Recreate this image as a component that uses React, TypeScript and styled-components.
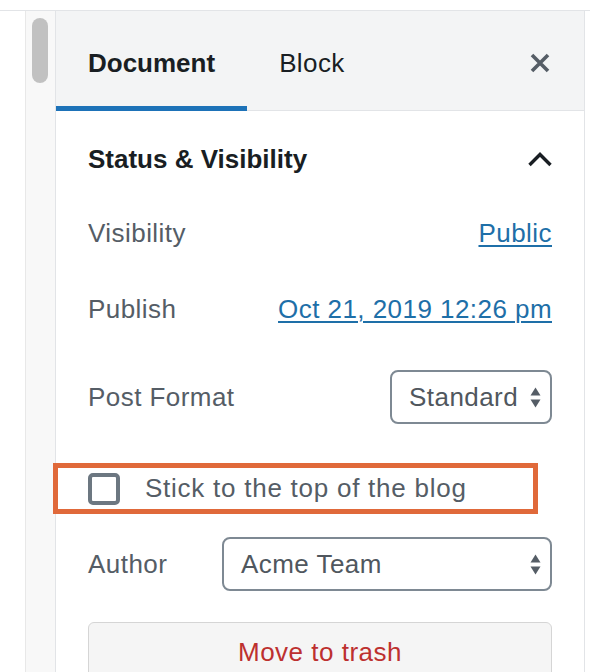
import React from "react";
import styled, { createGlobalStyle } from "styled-components";

const Global = createGlobalStyle`
  html, body { margin: 0; padding: 0; background: #fff; }
  body { font-family: "Liberation Sans", Arial, sans-serif; }
  * { box-sizing: border-box; }
`;

const Page = styled.div`
  display: flex;
  flex-direction: column;
  height: 672px;
  overflow: hidden;
  background: #fff;
`;

const TopStrip = styled.div`
  height: 11px;
  flex: none;
  border-bottom: 1px solid #e2e4e7;
`;

const Main = styled.div`
  flex: 1;
  display: flex;
  min-height: 0;
`;

const Gutter = styled.div`
  width: 25px;
  flex: none;
`;

const Track = styled.div`
  width: 30px;
  flex: none;
  border-left: 1px solid #e8e8e8;
  background: #f8f8f8;
  padding: 7px 0 0 6px;
`;

const Thumb = styled.div`
  width: 16px;
  height: 65px;
  border-radius: 8px;
  background: #c1c1c1;
`;

const Sidebar = styled.aside`
  width: 530px;
  flex: none;
  border-left: 1px solid #e2e4e7;
  border-right: 1px solid #e2e4e7;
  display: flex;
  flex-direction: column;
`;

const Header = styled.div`
  height: 100px;
  flex: none;
  display: flex;
  align-items: stretch;
  background: #f3f4f5;
  box-shadow: inset 0 -1px 0 #e2e4e7;
`;

const Tab = styled.button<{ $active?: boolean }>`
  border: 0;
  margin: 0;
  background: transparent;
  padding: 4px 32px 0;
  font-family: inherit;
  font-size: 26px;
  color: #191e23;
  font-weight: ${(p) => (p.$active ? 700 : 400)};
  letter-spacing: ${(p) => (p.$active ? "0" : "0.4px")};
  box-shadow: ${(p) => (p.$active ? "inset 0 -5px 0 #1d72b8" : "none")};
  cursor: pointer;
`;

const CloseButton = styled.button`
  margin-left: auto;
  margin-right: 34px;
  border: 0;
  padding: 4px 0 0;
  background: transparent;
  display: flex;
  align-items: center;
  color: #555d66;
`;

const Body = styled.div`
  padding: 0 32px;
  display: flex;
  flex-direction: column;
`;

const PanelTitle = styled.div`
  height: 96px;
  display: flex;
  align-items: center;
  justify-content: space-between;
  font-size: 26px;
  font-weight: 700;
  color: #191e23;
`;

const Row = styled.div<{ $h: number; $mt: number }>`
  height: ${(p) => p.$h}px;
  margin-top: ${(p) => p.$mt}px;
  display: flex;
  align-items: center;
  justify-content: space-between;
  font-size: 26px;
  letter-spacing: 0.45px;
  color: #555d66;
`;

const Label = styled.span`
  color: #555d66;
`;

const Link = styled.a`
  color: #1e6fa8;
  text-decoration: underline;
  text-underline-offset: 3px;
  text-decoration-thickness: 2px;
`;

const SelectBox = styled.div<{ $w: number }>`
  width: ${(p) => p.$w}px;
  height: 54px;
  border: 2px solid #7e8993;
  border-radius: 8px;
  display: flex;
  align-items: center;
  padding: 0 9px 0 17px;
  font-size: 26px;
  color: #50575e;
  background: #fff;
`;

const SelectText = styled.span`
  flex: 1;
`;

const Highlight = styled.div`
  margin-top: 39px;
  margin-left: -35px;
  width: 485px;
  height: 51px;
  border: 5px solid #e0693a;
  display: flex;
  align-items: center;
  padding-left: 30px;
  gap: 25px;
  font-size: 26px;
  letter-spacing: 0.75px;
  color: #555d66;
`;

const Checkbox = styled.span`
  width: 32px;
  height: 32px;
  border: 4px solid #6c7781;
  border-radius: 5px;
  background: #fff;
  flex: none;
`;

const TrashButton = styled.button`
  margin-top: 31px;
  width: 100%;
  height: 62px;
  border: 1.5px solid #d5d5d5;
  border-radius: 6px;
  background: #f5f5f5;
  font-family: inherit;
  font-size: 26px;
  letter-spacing: 0.5px;
  color: #bd302f;
  padding: 0 0 2px;
`;

const Arrows = () => (
  <svg width="11" height="21" viewBox="0 0 11 21" aria-hidden="true">
    <path d="M5.5 0.5 L10.5 8.5 L0.5 8.5 Z" fill="#555d66" />
    <path d="M5.5 20.5 L10.5 12.5 L0.5 12.5 Z" fill="#555d66" />
  </svg>
);

const CloseIcon = () => (
  <svg width="20" height="20" viewBox="0 0 20 20" aria-hidden="true">
    <path d="M2 2 L18 18 M18 2 L2 18" stroke="currentColor" strokeWidth="3.6" strokeLinecap="butt" />
  </svg>
);

const ChevronUp = () => (
  <svg width="24" height="15" viewBox="0 0 24 15" aria-hidden="true">
    <path d="M1.5 13 L12 2.5 L22.5 13" fill="none" stroke="#191e23" strokeWidth="3.4" />
  </svg>
);

export default function App() {
  return (
    <>
      <Global />
      <Page>
        <TopStrip />
        <Main>
          <Gutter />
          <Track>
            <Thumb />
          </Track>
          <Sidebar>
            <Header>
              <Tab $active>Document</Tab>
              <Tab>Block</Tab>
              <CloseButton aria-label="Close settings">
                <CloseIcon />
              </CloseButton>
            </Header>
            <Body>
              <PanelTitle>
                <span>Status &amp; Visibility</span>
                <ChevronUp />
              </PanelTitle>
              <Row $h={44} $mt={4}>
                <Label>Visibility</Label>
                <Link>Public</Link>
              </Row>
              <Row $h={44} $mt={32}>
                <Label>Publish</Label>
                <Link>Oct 21, 2019 12:26 pm</Link>
              </Row>
              <Row $h={54} $mt={39}>
                <Label>Post Format</Label>
                <SelectBox $w={162}>
                  <SelectText>Standard</SelectText>
                  <Arrows />
                </SelectBox>
              </Row>
              <Highlight>
                <Checkbox />
                <span>Stick to the top of the blog</span>
              </Highlight>
              <Row $h={54} $mt={23}>
                <Label>Author</Label>
                <SelectBox $w={330}>
                  <SelectText>Acme Team</SelectText>
                  <Arrows />
                </SelectBox>
              </Row>
              <TrashButton>Move to trash</TrashButton>
            </Body>
          </Sidebar>
        </Main>
      </Page>
    </>
  );
}
